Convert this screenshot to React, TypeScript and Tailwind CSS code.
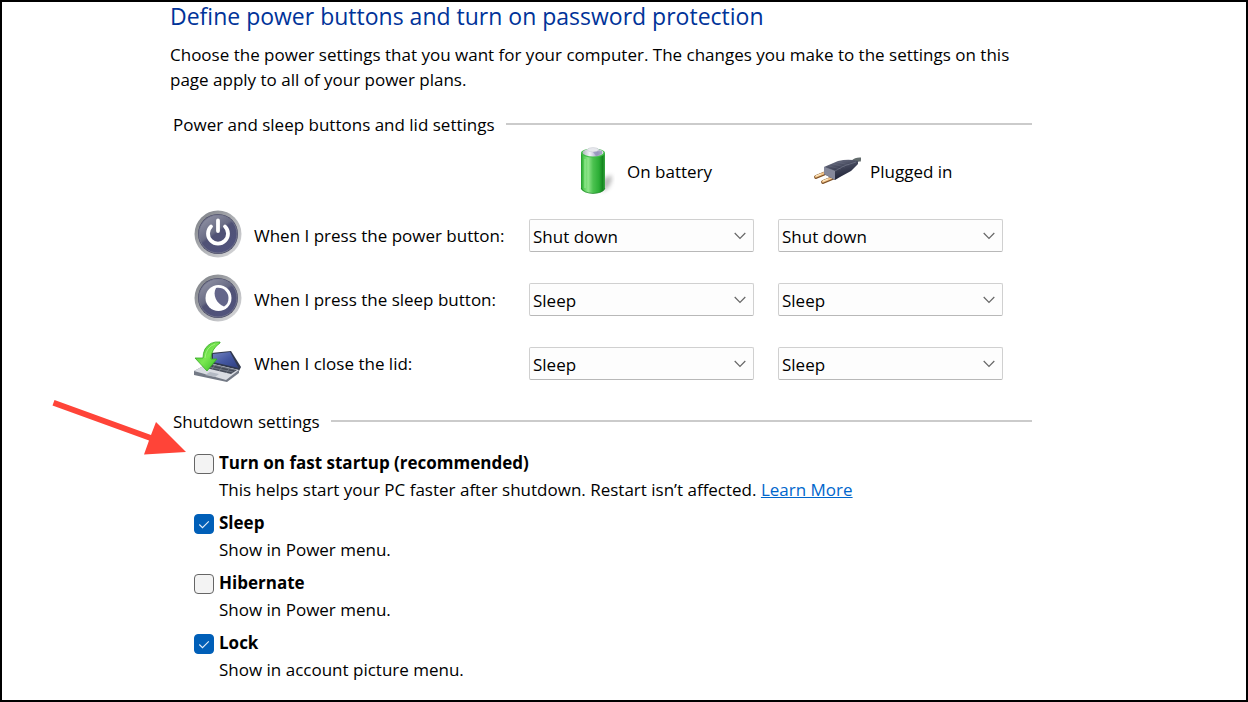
import { useId, useState } from "react";
import type { ReactNode } from "react";

function BatteryIcon() {
  return (
    <svg width="38" height="48" viewBox="0 0 38 48" aria-hidden="true">
      <defs>
        <linearGradient id="bat" x1="0" x2="1">
          <stop offset="0" stopColor="#219a2b" />
          <stop offset=".12" stopColor="#58cf58" />
          <stop offset=".3" stopColor="#8fe58a" />
          <stop offset=".5" stopColor="#4cc250" />
          <stop offset=".75" stopColor="#2cae36" />
          <stop offset=".9" stopColor="#15861f" />
          <stop offset="1" stopColor="#39a842" />
        </linearGradient>
        <linearGradient id="batTop" x1="0" x2="1">
          <stop offset="0" stopColor="#aeb6ba" />
          <stop offset=".35" stopColor="#f4f4fa" />
          <stop offset=".7" stopColor="#a5a3c4" />
          <stop offset="1" stopColor="#dfe4e4" />
        </linearGradient>
        <filter id="batBlur" x="-50%" y="-50%" width="200%" height="200%">
          <feGaussianBlur stdDeviation="2" />
        </filter>
      </defs>
      <path d="M26 32L34 28Q37 32 31 41L25 45Z" fill="#777" opacity=".5" filter="url(#batBlur)" />
      <path d="M4 6V42Q6 46 16 46.500Q26 46 28 42V6Z" fill="url(#bat)" />
      <path d="M4 41Q7 46 16 46.500Q26 46 28 41" fill="none" stroke="#20842a" opacity=".7" />
      <ellipse cx="16" cy="6" rx="12" ry="4.500" fill="#42bd49" />
      <ellipse cx="16" cy="5.500" rx="10.500" ry="4" fill="url(#batTop)" />
      <path d="M10 3Q11 .500 16 .500Q21 .500 22 3Q20 5 16 5Q12 5 10 3Z" fill="#e7e8ed" stroke="#c6c8d0" strokeWidth=".5" />
      <path d="M16 5L25 4V7L19 9Z" fill="#918fb8" opacity=".65" />
      <path d="M8 12V41" stroke="#cdffc7" strokeWidth="1.500" opacity=".35" />
    </svg>
  );
}

function PlugIcon() {
  return (
    <svg width="48" height="32" viewBox="0 0 48 32" aria-hidden="true">
      <defs>
        <linearGradient id="plug" x1="0" x2=".4" y2="1">
          <stop stopColor="#7c8093" />
          <stop offset=".45" stopColor="#45495d" />
          <stop offset="1" stopColor="#202438" />
        </linearGradient>
      </defs>
      <path d="M40 7Q43 4 48 4.500" fill="none" stroke="#626b6c" strokeWidth="4" />
      <path d="M15 17L3 22M22 22L10 27" stroke="#805329" strokeWidth="3.800" strokeLinecap="round" />
      <path d="M15 16.500L3 21.500M22 21.500L10 26.500" stroke="#f2c58c" strokeWidth="2.200" strokeLinecap="round" />
      <path d="M3 21L8 19M10 26L15 24" stroke="#fff0ce" strokeWidth="1" />
      <path d="M11 12L25 6Q33 4 40 5L45 6V9L38 16L27 22L22 25L11 19Z" fill="url(#plug)" />
      <path d="M11 12L22 16V25L11 19Z" fill="#85889b" />
      <path d="M11 12L22 16L31 11L43 7" fill="none" stroke="#9ba0b0" strokeWidth=".7" opacity=".5" />
      <path d="M16 11L28 14M20 9L32 12M24 7L36 10" stroke="#9498a8" strokeWidth=".5" opacity=".35" />
    </svg>
  );
}

function RoundIcon({ id, children }: { id: string; children: ReactNode }) {
  return (
    <svg width="48" height="48" viewBox="0 0 48 48" className="mb-[2px] shrink-0" aria-hidden="true">
      <defs>
        <linearGradient id={id + "-rim"} x1="0" y1="0" x2="1" y2="1">
          <stop stopColor="#777a80" />
          <stop offset=".5" stopColor="#aeb0b4" />
          <stop offset="1" stopColor="#dddddf" />
        </linearGradient>
        <linearGradient id={id + "-face"} x1=".1" y1="0" x2=".8" y2="1">
          <stop stopColor="#9496a8" />
          <stop offset=".44" stopColor="#696c84" />
          <stop offset=".5" stopColor="#505275" />
          <stop offset="1" stopColor="#51537e" />
        </linearGradient>
      </defs>
      <circle cx="24" cy="24" r="23.500" fill={"url(#" + id + "-rim)"} />
      <circle cx="24" cy="24" r="20" fill="#4a4b65" />
      <circle cx="24" cy="24" r="19" fill={"url(#" + id + "-face)"} stroke="#7a7c94" strokeWidth=".8" />
      {children}
    </svg>
  );
}

function PowerIcon() {
  return (
    <RoundIcon id="power">
      <path d="M17 16.500A10 10 0 1 0 31 16.500M24 10.500V21" fill="none" stroke="#fff" strokeWidth="3.800" strokeLinecap="round" />
    </RoundIcon>
  );
}

function MoonIcon() {
  return (
    <RoundIcon id="moon">
      <circle cx="24.500" cy="24" r="13" fill="#fff" />
      <path d="M22 14C29 12.500 34.500 18 34.500 24C34.500 28 33 31 30 32.500C23 30 18 21 22 14Z" fill="#64668a" />
    </RoundIcon>
  );
}

function LidIcon() {
  return (
    <svg width="48" height="44" viewBox="0 0 48 44" className="mb-[2px] shrink-0" aria-hidden="true">
      <defs>
        <linearGradient id="screen" x2="1" y2="1">
          <stop stopColor="#7384c0" />
          <stop offset=".5" stopColor="#4558a2" />
          <stop offset="1" stopColor="#2d3e80" />
        </linearGradient>
        <linearGradient id="greenArrow" x2="1" y2="1">
          <stop stopColor="#39bc29" />
          <stop offset=".5" stopColor="#7be852" />
          <stop offset="1" stopColor="#27b51b" />
        </linearGradient>
      </defs>
      <path d="M17 13L37 11L47 27L45 31L18 25Z" fill="#30384e" />
      <path d="M19 14L36 12L44.500 28L19 22Z" fill="url(#screen)" />
      <path d="M0 31L15 23L45 30V33L33 42L0 35Z" fill="#737985" />
      <path d="M0 31L15 23L45 30L32 40Z" fill="#d9dce2" />
      <path d="M17 24L43 30L37 34L12 28Z" fill="#454b58" />
      <path d="M15 27L39 32M19 25L41 30M21 25L18 29M28 27L25 31M35 29L32 33" stroke="#868d99" strokeWidth=".6" />
      <path d="M16 32L25 34L21 37L11 35Z" fill="#b4bac4" />
      <path d="M26 2Q16 1 11 9Q9 13 9 18L1 18L13 31L23 19L17 19Q17 9 26 3Z" fill="url(#greenArrow)" stroke="#36a923" strokeWidth=".8" />
      <path d="M21 4Q12 7 11 18" fill="none" stroke="#bdfa9e" strokeWidth="1" opacity=".6" />
    </svg>
  );
}

function ActionSelect({ label, initial }: { label: string; initial: string }) {
  return (
    <div className="relative">
      <select
        aria-label={label}
        defaultValue={initial}
        className="block h-[33px] w-full appearance-none rounded-[2px] border border-[#d0d0d0] border-b-[#b8b8b8] bg-[#fdfdfd] pl-[3px] pr-8 pt-[2px] text-[17px] text-black"
      >
        <option>Do nothing</option>
        <option>Sleep</option>
        <option>Hibernate</option>
        <option>Shut down</option>
      </select>
      <svg width="12" height="8" viewBox="0 0 12 8" className="pointer-events-none absolute right-2 top-[13px]" aria-hidden="true">
        <path d="M.700 1L6 6.300L11.300 1" fill="none" stroke="#666" strokeWidth="1.200" />
      </svg>
    </div>
  );
}

function ActionRow({ icon, label, initial }: { icon: ReactNode; label: string; initial: string }) {
  return (
    <div className="grid h-16 grid-cols-[1fr_225px_225px] items-center gap-x-6">
      <div className="flex items-center gap-3 whitespace-nowrap">
        {icon}
        <span>{label}</span>
      </div>
      <ActionSelect label={label + " On battery"} initial={initial} />
      <ActionSelect label={label + " Plugged in"} initial={initial} />
    </div>
  );
}

function SectionTitle({ children }: { children: ReactNode }) {
  return (
    <div className="flex items-center gap-[11px] pl-[3px]">
      <h2>{children}</h2>
      <div className="mb-[2px] h-[2px] flex-1 bg-[#cbcbcb]" />
    </div>
  );
}

function CheckOption({ title, initial, children }: { title: string; initial: boolean; children: ReactNode }) {
  const id = useId();
  const [checked, setChecked] = useState(initial);
  return (
    <div className="flex h-[60px] gap-[5px]">
      <div className="relative mt-1 size-5 shrink-0">
        <input
          id={id}
          type="checkbox"
          checked={checked}
          onChange={(e) => setChecked(e.target.checked)}
          className="block size-5 appearance-none rounded-[4px] border border-[#666] bg-[#f3f3f3] checked:border-[#005fb8] checked:bg-[#005fb8]"
        />
        {checked && (
          <svg viewBox="0 0 20 20" className="pointer-events-none absolute inset-0" aria-hidden="true">
            <path d="M5.300 10.500L8.500 13.700L14.800 7.400" fill="none" stroke="#e4eef8" strokeWidth="1.100" />
          </svg>
        )}
      </div>
      <div>
        <label htmlFor={id} className="block leading-[26px] font-bold">{title}</label>
        <p className="leading-[28px]">{children}</p>
      </div>
    </div>
  );
}

export default function App() {
  return (
    <main className="min-h-screen border-2 border-black bg-white pl-[168px] pr-[214px] font-['Open_Sans','Noto_Sans',sans-serif] text-[17px] leading-[25px] text-black">
      <h1 className="text-[23px] leading-[28px] text-[#003399]">Define power buttons and turn on password protection</h1>
      <p className="mt-3">
        Choose the power settings that you want for your computer. The changes you make to the settings on this page apply to all of your power plans.
      </p>

      <section className="mt-5">
        <SectionTitle>Power and sleep buttons and lid settings</SectionTitle>
        <div className="mt-[2px] pl-6 pr-[29px]">
          <div className="grid h-16 grid-cols-[1fr_225px_225px] items-center gap-x-6">
            <div />
            <div className="flex items-center gap-3 pl-12">
              <BatteryIcon />
              <span>On battery</span>
            </div>
            <div className="flex items-center gap-[9px] pl-[35px]">
              <PlugIcon />
              <span>Plugged in</span>
            </div>
          </div>
          <ActionRow icon={<PowerIcon />} label="When I press the power button:" initial="Shut down" />
          <ActionRow icon={<MoonIcon />} label="When I press the sleep button:" initial="Sleep" />
          <ActionRow icon={<LidIcon />} label="When I close the lid:" initial="Sleep" />
        </div>
      </section>

      <section className="relative mt-[14px]">
        <SectionTitle>Shutdown settings</SectionTitle>
        <div className="mt-4 pl-6">
          <CheckOption title="Turn on fast startup (recommended)" initial={false}>
            This helps start your PC faster after shutdown. Restart isn’t affected.{" "}
            <a href="#learn-more" className="text-[#0066cc] underline">Learn More</a>
          </CheckOption>
          <CheckOption title="Sleep" initial={true}>Show in Power menu.</CheckOption>
          <CheckOption title="Hibernate" initial={false}>Show in Power menu.</CheckOption>
          <CheckOption title="Lock" initial={true}>Show in account picture menu.</CheckOption>
        </div>
        <svg width="136" height="58" viewBox="0 0 136 58" className="pointer-events-none absolute -left-[119px] -top-[10px]" aria-hidden="true">
          <path d="M3.500 1L100 36L105 23L135 53L93 55.500L98 41.500L1.500 6.500Z" fill="#ff4438" />
        </svg>
      </section>
    </main>
  );
}
